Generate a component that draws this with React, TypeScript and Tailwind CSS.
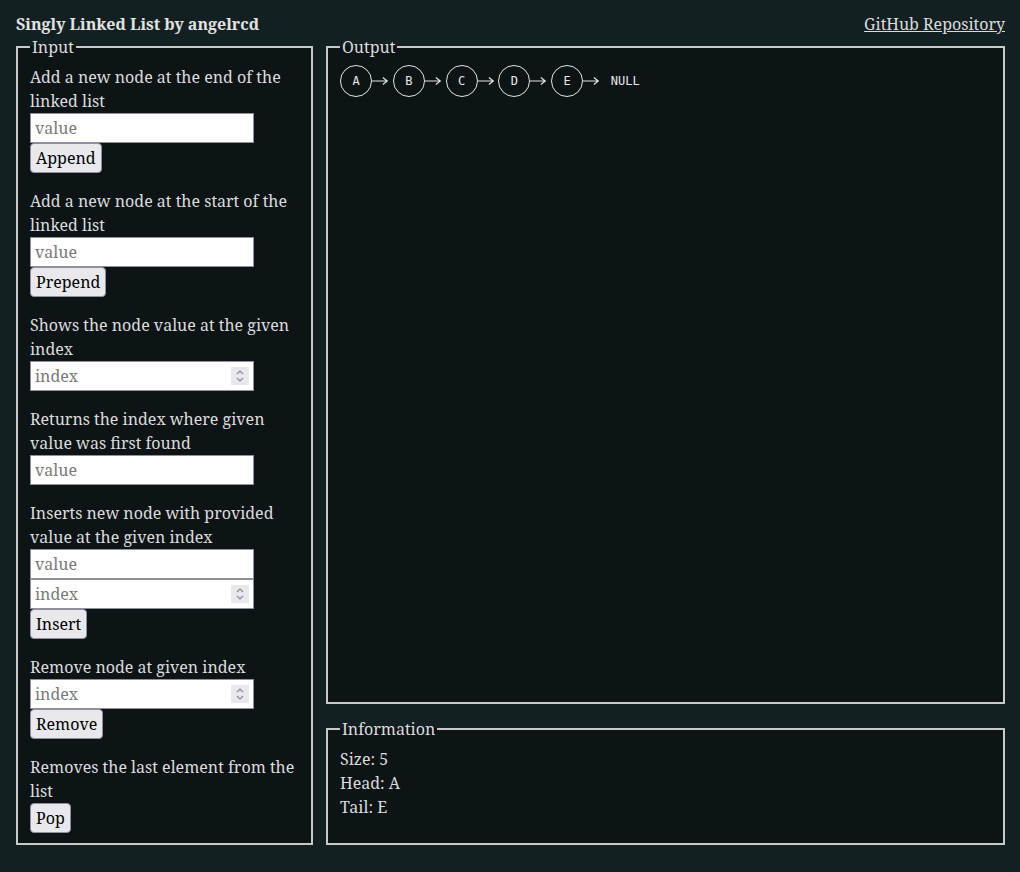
import { useState } from "react";

const nodes = ["A", "B", "C", "D", "E"];

function Arrow() {
  return (
    <svg viewBox="0 0 17 10" preserveAspectRatio="none" className="h-[10px] w-[16.75px] shrink-0">
      <path d="M0 5H15.5M11 1.5L15.5 5L11 8.5" fill="none" stroke="#e4e4e4" strokeWidth="1.2" />
    </svg>
  );
}

function TextField({ placeholder }: { placeholder: string }) {
  return (
    <input
      type="text"
      placeholder={placeholder}
      className="block h-[30px] w-[224px] border border-[#8f8f9d] bg-white px-1 text-base leading-6 text-black outline-none placeholder:text-[#7a7a7a]"
    />
  );
}

function NumberField({ placeholder }: { placeholder: string }) {
  return (
    <div className="flex h-[30px] w-[224px] items-center border border-[#8f8f9d] bg-white pr-[4px]">
      <input
        type="text"
        placeholder={placeholder}
        className="h-full min-w-0 flex-1 bg-transparent px-1 text-base leading-6 text-black outline-none placeholder:text-[#7a7a7a]"
      />
      <span className="flex h-[18px] w-[18px] flex-col items-center justify-center bg-[#e9e9ed]">
        <svg width="10" height="14" viewBox="0 0 10 14">
          <path d="M2 5L5 2L8 5M2 9L5 12L8 9" fill="none" stroke="#8a8a96" strokeWidth="1.2" />
        </svg>
      </span>
    </div>
  );
}

function Btn({ label }: { label: string }) {
  return (
    <button className="block h-[30px] rounded-[4px] border border-[#8f8f9d] bg-[#e9e9ed] px-[5px] text-base leading-6 text-black">
      {label}
    </button>
  );
}

function Section({ text, children }: { text: string; children: React.ReactNode }) {
  return (
    <div className="mb-4 last:mb-0">
      <p className="leading-6">{text}</p>
      {children}
    </div>
  );
}

export default function App() {
  const [size] = useState(nodes.length);

  return (
    <div className="min-h-screen bg-[#132021] pb-7 pl-4 pr-[15px] pt-3 font-['Noto_Serif','DejaVu_Serif',serif] text-base text-[#dcdcdc]">
      <header className="flex h-6 items-center justify-between leading-6">
        <h1 className="font-bold text-[#e2e2e2]">Singly Linked List by angelrcd</h1>
        <a href="#" className="underline">GitHub Repository</a>
      </header>

      <main className="-mt-px grid grid-cols-[297px_1fr] gap-[13px]">
        <fieldset className="border-2 border-[#c9c9c9] bg-[#0c1416] px-3 pb-[10px] pt-[6px]">
          <legend className="px-0.5 leading-6">Input</legend>
          <Section text="Add a new node at the end of the linked list">
            <TextField placeholder="value" />
            <Btn label="Append" />
          </Section>
          <Section text="Add a new node at the start of the linked list">
            <TextField placeholder="value" />
            <Btn label="Prepend" />
          </Section>
          <Section text="Shows the node value at the given index">
            <NumberField placeholder="index" />
          </Section>
          <Section text="Returns the index where given value was first found">
            <TextField placeholder="value" />
          </Section>
          <Section text="Inserts new node with provided value at the given index">
            <TextField placeholder="value" />
            <NumberField placeholder="index" />
            <Btn label="Insert" />
          </Section>
          <Section text="Remove node at given index">
            <NumberField placeholder="index" />
            <Btn label="Remove" />
          </Section>
          <Section text="Removes the last element from the list">
            <Btn label="Pop" />
          </Section>
        </fieldset>

        <div className="flex flex-col gap-[13px]">
          <fieldset className="flex-1 border-2 border-[#c9c9c9] bg-[#0c1416] px-3 pt-[6px]">
            <legend className="px-0.5 leading-6">Output</legend>
            <div className="flex items-center font-['DejaVu_Sans_Mono',monospace] text-[12px] text-[#e8e8e8]">
              {nodes.map((n) => (
                <div key={n} className="flex items-center">
                  <span className="flex h-[32px] w-[32px] items-center justify-center rounded-full border border-[#e4e4e4]">
                    {n}
                  </span>
                  <Arrow />
                  {n !== "E" && <span className="w-[4px]" />}
                </div>
              ))}
              <span className="ml-[11px]">NULL</span>
            </div>
          </fieldset>

          <fieldset className="h-[128px] border-2 border-[#c9c9c9] bg-[#0c1416] px-3 pt-[6px]">
            <legend className="px-0.5 leading-6">Information</legend>
            <p className="leading-6">Size: {size}</p>
            <p className="leading-6">Head: A</p>
            <p className="leading-6">Tail: E</p>
          </fieldset>
        </div>
      </main>
    </div>
  );
}
